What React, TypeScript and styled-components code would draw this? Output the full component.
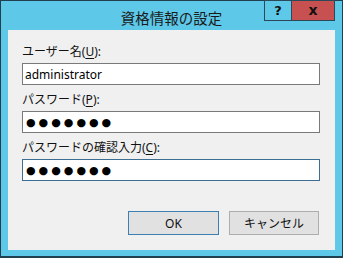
import { createGlobalStyle, styled } from "styled-components";

const GlobalStyle = createGlobalStyle`
  html, body {
    margin: 0;
    padding: 0;
    background: #ffffff;
  }
  body {
    font-family: "Noto Sans", "Noto Sans CJK JP", sans-serif;
  }
`;

const Window = styled.div`
  width: 343px;
  height: 258px;
  box-sizing: border-box;
  background: #5dc8e8;
  border: 1px solid #21404f;
  border-bottom-width: 2px;
  display: flex;
  flex-direction: column;
  padding: 0 7px 6px 7px;
`;

const TitleBar = styled.div`
  height: 29px;
  display: grid;
  grid-template-columns: 1fr auto 1fr;
  align-items: start;
`;

const Title = styled.div`
  grid-column: 2;
  font-family: "Noto Sans CJK JP", sans-serif;
  font-size: 14.5px;
  line-height: 20px;
  margin-top: 7px;
  color: #1a1a1a;
`;

const Controls = styled.div`
  grid-column: 3;
  justify-self: end;
  display: flex;
  margin-top: -1px;
`;

const CaptionButton = styled.div<{ $close?: boolean }>`
  width: ${(p) => (p.$close ? "43px" : "28px")};
  height: 21px;
  box-sizing: border-box;
  border: 1px solid #2a4a5a;
  border-left-width: ${(p) => (p.$close ? "0" : "1px")};
  background: ${(p) => (p.$close ? "#c75050" : "#5dc8e8")};
  display: flex;
  align-items: center;
  justify-content: center;
  font-family: "DejaVu Sans", sans-serif;
  font-weight: bold;
  font-size: ${(p) => (p.$close ? "14px" : "13px")};
  line-height: 1;
  padding-bottom: 1px;
  color: #111;
`;

const Client = styled.div`
  flex: 1;
  background: #f0f0f0;
  padding: 14px 15px 0 14px;
  display: flex;
  flex-direction: column;
`;

const Field = styled.div`
  display: flex;
  flex-direction: column;
  margin-bottom: 7px;
`;

const Label = styled.label`
  font-family: "Noto Sans", "Noto Sans CJK JP", sans-serif;
  font-size: 12px;
  line-height: 16px;
  color: #111;
  margin-bottom: 3px;
  u {
    text-decoration-thickness: 1px;
    text-underline-offset: 2px;
  }
`;

const TextBox = styled.input<{ $focused?: boolean; $mask?: boolean }>`
  width: 298px;
  height: 22px;
  box-sizing: border-box;
  margin: 0;
  border: 1px solid ${(p) => (p.$focused ? "#3e6d92" : "#7a7a7a")};
  background: #ffffff;
  padding: 0 0 0 ${(p) => (p.$mask ? "3px" : "2px")};
  outline: none;
  font-family: ${(p) => (p.$mask ? '"DejaVu Sans"' : '"Noto Sans"')}, sans-serif;
  font-size: ${(p) => (p.$mask ? "11px" : "12px")};
  letter-spacing: ${(p) => (p.$mask ? "3px" : "0")};
  color: #000;
`;

const ButtonRow = styled.div`
  margin-top: 23px;
  display: flex;
  justify-content: flex-end;
  gap: 10px;
  padding-right: 1px;
`;

const Button = styled.button<{ $default?: boolean; $w: number }>`
  width: ${(p) => p.$w}px;
  height: 24px;
  box-sizing: border-box;
  margin: 0;
  padding: 0;
  background: #e1e1e1;
  border: 1px solid ${(p) => (p.$default ? "#3c7fb1" : "#adadad")};
  font-family: "Noto Sans", "Noto Sans CJK JP", sans-serif;
  font-size: 12px;
  color: #111;
`;

export default function App() {
  return (
    <>
      <GlobalStyle />
      <Window>
        <TitleBar>
          <Title>資格情報の設定</Title>
          <Controls>
            <CaptionButton>?</CaptionButton>
            <CaptionButton $close>x</CaptionButton>
          </Controls>
        </TitleBar>
        <Client>
          <Field>
            <Label htmlFor="user">
              ユーザー名(<u>U</u>):
            </Label>
            <TextBox id="user" defaultValue="administrator" />
          </Field>
          <Field>
            <Label htmlFor="pass">
              パスワード(<u>P</u>):
            </Label>
            <TextBox id="pass" $mask defaultValue="●●●●●●●" />
          </Field>
          <Field>
            <Label htmlFor="confirm">
              パスワードの確認入力(<u>C</u>):
            </Label>
            <TextBox id="confirm" $mask $focused defaultValue="●●●●●●●" />
          </Field>
          <ButtonRow>
            <Button $default $w={91}>OK</Button>
            <Button $w={90}>キャンセル</Button>
          </ButtonRow>
        </Client>
      </Window>
    </>
  );
}
